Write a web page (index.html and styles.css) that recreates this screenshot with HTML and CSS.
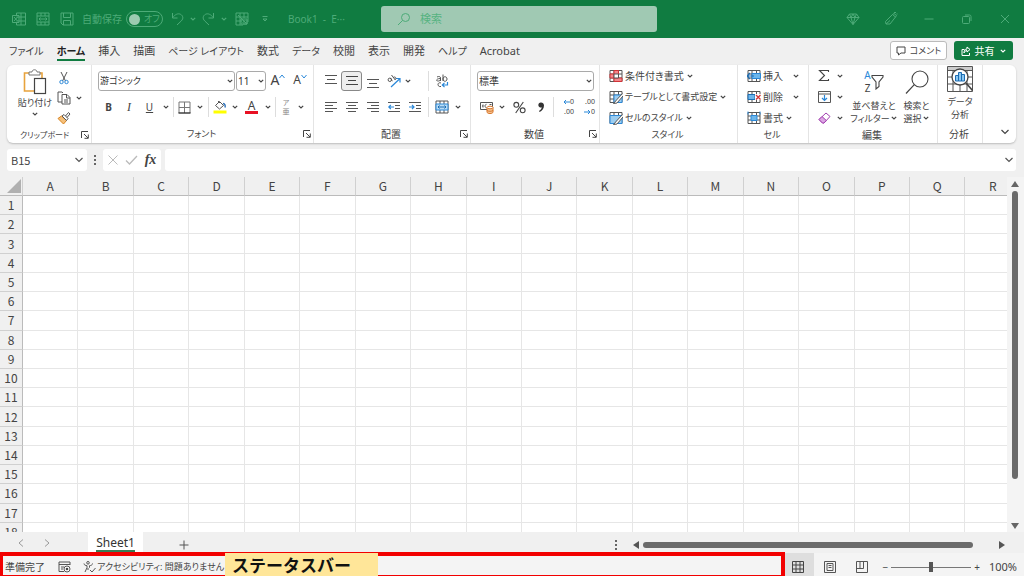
FILE: index.html
```html
<!DOCTYPE html>
<html lang="ja">
<head>
<meta charset="utf-8">
<title>Book1 - Excel</title>
<link rel="stylesheet" href="styles.css">
</head>
<body>
<svg class="defs" aria-hidden="true">
  <symbol id="chev" viewBox="0 0 8 8"><path d="M1.8 2.8 4 5l2.2-2.2" fill="none" stroke="currentColor" stroke-width="1.2"/></symbol>
  <symbol id="launch" viewBox="0 0 8 8"><path d="M.5 7V.5H7M3 3l4 4M7.300 3.500V7.300H3.500" fill="none" stroke="currentColor"/></symbol>
  <symbol id="tbl" viewBox="0 0 14 14"><path d="M1 1.500h12v11H1zM1 5h12M1 9h12M5 1.500v11M9.500 1.500v11" fill="#fff" stroke="#555"/></symbol>
</svg>

<header class="titlebar">
  <div class="quick">
    <svg width="14" height="14" viewBox="0 0 14 14"><path d="M4.500 3V1h9v12h-9v-2M9 1v12M4.500 5h9M4.500 9h9M.5 3.500H7v7H.5zM2 5l3.500 4M5.500 5 2 9"/></svg>
    <svg width="14" height="14" viewBox="0 0 14 14"><path d="M1 1h12v12H1zM1 4h12M1 10h12M5 1v3M9 1v3M5 10v3M9 10v3M3 7h8M4.500 5.500 3 7l1.500 1.500M9.500 5.500 11 7 9.500 8.500"/></svg>
    <svg width="14" height="14" viewBox="0 0 14 14"><path d="M1 1h12v12H3l-2-2zM3.500 1v4.500h7V1M3.500 13V8.500h7V13"/></svg>
  </div>
  <label class="autosave"><span>自動保存</span><input type="checkbox" role="switch" aria-label="自動保存"><span class="switch"><i></i>オフ</span></label>
  <div class="history">
    <button aria-label="元に戻す"><svg width="14" height="14" viewBox="0 0 14 14"><path d="M1.500 1v5h5M1.800 5.500C4 2.500 7 1 9.500 2.300s3.300 4.200.8 6.600L6 13"/></svg></button>
    <button aria-label="元に戻す一覧"><svg class="c"><use href="#chev"/></svg></button>
    <button aria-label="やり直し"><svg width="14" height="14" viewBox="0 0 14 14"><path d="M12.500 1v5h-5M12.200 5.500C10 2.500 7 1 4.500 2.300s-3.300 4.200-.8 6.600L8 13"/></svg></button>
    <button aria-label="やり直し一覧"><svg class="c"><use href="#chev"/></svg></button>
    <button aria-label="表の選択"><svg width="14" height="14" viewBox="0 0 14 14"><path d="M1 1h12v9M1 1v12h7M1 5h12M1 9h6M5 1v12M9 1v5M3 3l9 9M12 8v4H8M6 7h6v5H6zM7.500 8l3 3M10.500 8l-3 3"/></svg></button>
    <button aria-label="クイック アクセスのカスタマイズ"><svg width="8" height="8" viewBox="0 0 8 8"><path d="M1.500 1.500h5M2 4h4L4 6z"/></svg></button>
  </div>
  <span class="doc">Book1&nbsp; -&nbsp; E···</span>
  <label class="search"><svg width="14" height="14" viewBox="0 0 14 14"><circle cx="8.500" cy="5.500" r="4"/><path d="M5.500 8.500 1 13"/></svg><input type="text" placeholder="検索" aria-label="検索"></label>
  <div class="window">
    <button aria-label="プレミアム"><svg width="14" height="14" viewBox="0 0 14 14"><path d="M3.500 2h7L13 5.500 7 12.500 1 5.500zM1 5.500h12M3.500 2l1.500 3.500 2 7 2-7L10.500 2M5 5.500 7 2l2 3.500"/></svg></button>
    <button aria-label="ペン"><svg width="14" height="14" viewBox="0 0 14 14"><path d="M8.500 2.500 11.500 5 6 12H2l-.5-2.500zM8.500 2.500l1.500-1 2.500 2-1 1.500M2 12l4-3.500M10 .5h2M12.500 2h1"/></svg></button>
    <button aria-label="最小化"><svg width="10" height="10" viewBox="0 0 10 10"><path d="M.5 5h9"/></svg></button>
    <button aria-label="元のサイズ"><svg width="10" height="10" viewBox="0 0 10 10"><rect x=".5" y="2.500" width="7" height="7" rx="1"/><path d="M3 1h4.500A1.500 1.500 0 0 1 9 2.500V7"/></svg></button>
    <button aria-label="閉じる"><svg width="10" height="10" viewBox="0 0 10 10"><path d="m1 1 8 8M9 1 1 9"/></svg></button>
  </div>
</header>

<nav class="tabs">
  <a href="#" class="kana">ファイル</a><a href="#" class="kana on">ホーム</a><a href="#">挿入</a><a href="#">描画</a><a href="#" class="kana">ページ レイアウト</a><a href="#">数式</a><a href="#" class="kana">データ</a><a href="#">校閲</a><a href="#">表示</a><a href="#">開発</a><a href="#" class="kana">ヘルプ</a><a href="#">Acrobat</a>
  <button class="comment"><svg width="10" height="10" viewBox="0 0 10 10"><path d="M1 1h8v6H5L2.500 9V7H1z" fill="none" stroke="#444"/></svg>コメント</button>
  <button class="share"><svg width="10" height="10" viewBox="0 0 10 10"><path d="M3.500 3.500H1v6h7.500V7M6 1l3 2.500L6 6V4.500C4.500 4.500 3.500 5.500 3 7c0-2.500 1-4 3-4z" fill="none" stroke="#fff"/></svg>共有<svg class="c"><use href="#chev"/></svg></button>
</nav>

<main class="ribbon">
  <section class="group">
    <div class="clip">
      <button class="big"><svg width="24" height="26" viewBox="0 0 24 26"><path d="M6 4H1.500v18H11M17 4h2v5" fill="none" stroke="#e8a33d" stroke-width="1.600"/><path d="M6 6V3h3c0-3 5-3 5 0h3v3z" fill="#fff" stroke="#777"/><rect x="11.500" y="9.500" width="11" height="15" fill="#fff" stroke="#444" stroke-width="1.200"/></svg>貼り付け<svg class="c"><use href="#chev"/></svg></button>
      <div class="cliptools">
        <button aria-label="切り取り"><svg width="12" height="14" viewBox="0 0 12 14"><path d="M3 1l4.500 9M9 1 4.500 10" fill="none" stroke="#555"/><circle cx="3.500" cy="11" r="1.700" fill="none" stroke="#2b88d8"/><circle cx="8.500" cy="11" r="1.700" fill="none" stroke="#2b88d8"/></svg></button><i></i>
        <button aria-label="コピー"><svg width="14" height="14" viewBox="0 0 14 14"><path d="M5 11H1V1h4l1 1M5 3.500h5L13 6.500V13H5zM9.500 3.500V7H13M7 9h4M7 11h4" fill="none" stroke="#555"/></svg></button><button aria-label="コピー一覧"><svg class="c"><use href="#chev"/></svg></button>
        <button aria-label="書式のコピー"><svg width="14" height="14" viewBox="0 0 14 14"><path d="M1 7.500 4.500 5l5 4.500L6.500 13z" fill="#f5c07a" stroke="#d98420"/><path d="M5 5l2-1.500 4 4-1.500 2zM8.500 5l3-3.500L13 3l-3 3.500" fill="#fff" stroke="#555"/></svg></button><i></i>
      </div>
    </div>
    <footer><span class="left-label">クリップボード</span><button aria-label="クリップボードの設定"><svg class="l"><use href="#launch"/></svg></button></footer>
  </section>

  <section class="group">
    <div class="two">
      <div class="fontpick">
        <label class="pick"><select aria-label="フォント"><option>游ゴシック</option></select><svg class="c"><use href="#chev"/></svg></label>
        <label class="pick"><select aria-label="サイズ"><option>11</option></select><svg class="c"><use href="#chev"/></svg></label>
        <button class="grow" aria-label="拡大">A<svg width="6" height="5" viewBox="0 0 6 5"><path d="M.5 4 3 1l2.500 3" fill="none" stroke="#2b88d8"/></svg></button>
        <button class="grow small" aria-label="縮小">A<svg width="6" height="5" viewBox="0 0 6 5"><path d="M.5 1 3 4l2.500-3" fill="none" stroke="#2b88d8"/></svg></button>
      </div>
      <div class="fonttools">
        <button><b>B</b></button><button><em>I</em></button><button><u>U</u></button><button aria-label="下線"><svg class="c"><use href="#chev"/></svg></button><hr>
        <button aria-label="罫線"><svg width="13" height="13" viewBox="0 0 13 13"><path d="M1 12V1h11v11M6.500 1v11M1 6.500h11" fill="none" stroke="#777"/><path d="M.5 12h12" stroke="#333" stroke-width="1.400"/></svg></button><button aria-label="罫線一覧"><svg class="c"><use href="#chev"/></svg></button><hr>
        <button aria-label="塗りつぶし"><svg width="14" height="14" viewBox="0 0 14 14"><path d="M2.500 5.500 6.500 1.500l4 4L6.500 9zM5 1l2 2" fill="#fff" stroke="#555"/><path d="M10 3.500c2 0 2.500 2 2 4" fill="none" stroke="#2b6fb8" stroke-width="1.400"/><path d="M.5 10.500h13v3H.5z" fill="#ff0"/></svg></button><button aria-label="塗りつぶし一覧"><svg class="c"><use href="#chev"/></svg></button>
        <button class="fontcolor" aria-label="フォントの色">A</button><button aria-label="色一覧"><svg class="c"><use href="#chev"/></svg></button><hr>
        <button class="ruby" aria-label="ふりがな"><span>ア</span><span>亜</span></button><button aria-label="ふりがな一覧"><svg class="c"><use href="#chev"/></svg></button>
      </div>
    </div>
    <footer><span>フォント</span><button aria-label="フォントの設定"><svg class="l"><use href="#launch"/></svg></button></footer>
  </section>

  <section class="group">
    <div class="two">
      <div class="aligntools">
        <button aria-label="上揃え"><svg width="12" height="14" viewBox="0 0 12 14"><path d="M0 1.500h12M2 5.500h8M0 9.500h12" stroke="#555"/></svg></button>
        <button class="pressed" aria-label="上下中央揃え"><svg width="12" height="12" viewBox="0 0 12 12"><path d="M0 1.500h12M2 5.500h8M0 9.500h12" stroke="#444"/></svg></button>
        <button aria-label="下揃え"><svg width="12" height="14" viewBox="0 0 12 14"><path d="M0 5.500h12M2 9.500h8M0 13.500h12" stroke="#555"/></svg></button>
        <button aria-label="方向"><svg width="14" height="14" viewBox="0 0 14 14"><path d="M4 13 12.500 5M9 4.500h4v4" fill="none" stroke="#2b88d8" stroke-width="1.200"/><circle cx="2.800" cy="5.800" r="1.700" fill="none" stroke="#555"/><path d="M3.500 4 5.300 7.200M4.500 1l3.800 5M6.300 3.500c2-1.500 3.500.7 1.800 2.300" fill="none" stroke="#555"/></svg></button><button aria-label="方向一覧"><svg class="c"><use href="#chev"/></svg></button><hr>
        <button class="wrap" aria-label="折り返し"><svg width="14" height="14" viewBox="0 0 14 14"><path d="M2 3c2-1 3.500-.5 3.500 1v3M5.500 4.500c-5 0-4.500 3-2 2.500 1 0 2-1 2-1.500M8 .5V7M8 5c0-3 4-3 4 0s-4 3-4 0M6 9c-4-1.500-4 4.500 0 3.500" fill="none" stroke="#555"/><path d="M12.500 8v3H7.500M9.500 8.800 7.300 11l2.200 2.200" fill="none" stroke="#2b88d8" stroke-width="1.200"/></svg></button><i></i>
      </div>
      <div class="aligntools">
        <button aria-label="左揃え"><svg width="12" height="12" viewBox="0 0 12 12"><path d="M0 1.500h12M0 4.500h8M0 7.500h12M0 10.500h8" stroke="#555"/></svg></button>
        <button aria-label="中央揃え"><svg width="12" height="12" viewBox="0 0 12 12"><path d="M0 1.500h12M2 4.500h8M0 7.500h12M2 10.500h8" stroke="#555"/></svg></button>
        <button aria-label="右揃え"><svg width="12" height="12" viewBox="0 0 12 12"><path d="M0 1.500h12M4 4.500h8M0 7.500h12M4 10.500h8" stroke="#555"/></svg></button>
        <button aria-label="インデントを減らす"><svg width="12" height="12" viewBox="0 0 12 12"><path d="M0 1.500h12M7 4.500h5M7 7.500h5M0 10.500h12" stroke="#555"/><path d="M6 6H.8M2.800 4 .8 6l2 2" fill="none" stroke="#2b88d8" stroke-width="1.200"/></svg></button>
        <button aria-label="インデントを増やす"><svg width="12" height="12" viewBox="0 0 12 12"><path d="M0 1.500h12M7 4.500h5M7 7.500h5M0 10.500h12" stroke="#555"/><path d="M0 6h5M3 4l2 2-2 2" fill="none" stroke="#2b88d8" stroke-width="1.200"/></svg></button><hr>
        <button aria-label="結合"><svg width="14" height="14" viewBox="0 0 14 14"><path d="M1 1h12v12H1zM5 1v3M9 1v3M5 10v3M9 10v3" fill="#fff" stroke="#555"/><path d="M1 4h12v6H1z" fill="#b9dcf5" stroke="#2b88d8"/><path d="M3 7h8M4.500 5.500 3 7l1.500 1.500M9.500 5.500 11 7 9.500 8.500" fill="none" stroke="#1c6db3"/></svg></button><button aria-label="結合一覧"><svg class="c"><use href="#chev"/></svg></button>
      </div>
    </div>
    <footer><span class="kanji">配置</span><button aria-label="配置の設定"><svg class="l"><use href="#launch"/></svg></button></footer>
  </section>

  <section class="group">
    <div class="two">
      <label class="pick"><select aria-label="表示形式"><option>標準</option></select><svg class="c"><use href="#chev"/></svg></label>
      <div class="numtools">
        <button aria-label="通貨"><svg width="14" height="13" viewBox="0 0 14 13"><path d="M.5 1.500h12v7H.5z" fill="#fff" stroke="#555"/><path d="M3 3.500v3M2 5h1M6.500 3.300c-2 0-2 3.400 0 3.400M9.500 3.500h2" fill="none" stroke="#555"/><path d="M7 6.500v4.500c0 2 6 2 6 0V6.500" fill="#f5c79a" stroke="#d9772a"/><ellipse cx="10" cy="6.500" rx="3" ry="1.300" fill="#fff" stroke="#d9772a"/><path d="M7 9c0 1.700 6 1.700 6 0" fill="none" stroke="#d9772a"/></svg></button><button aria-label="通貨一覧"><svg class="c"><use href="#chev"/></svg></button>
        <button aria-label="パーセント"><svg width="13" height="13" viewBox="0 0 13 13"><g fill="none" stroke="#444" stroke-width="1.100"><circle cx="3.300" cy="3.800" r="2.400"/><circle cx="9.700" cy="9.300" r="2.400"/><path d="M10.300 1 2.700 12"/></g></svg></button>
        <button aria-label="桁区切り"><svg width="8" height="12" viewBox="0 0 8 12"><path d="M4 1.500a2.500 2.500 0 1 0 .8 4.800C4.500 8 3.300 9.300 2 10l.6 1C5 10 7 7.500 7 4.500 7 2.500 5.700 1.500 4 1.500z" fill="#333"/></svg></button><hr>
        <button class="dec" aria-label="小数点以下を増やす"><span><svg width="7" height="6" viewBox="0 0 7 6"><path d="M7 3H1M3 1 1 3l2 2" fill="none" stroke="#2b88d8"/></svg>0</span><span>.00</span></button>
        <button class="dec" aria-label="小数点以下を減らす"><span>.00</span><span><svg width="7" height="6" viewBox="0 0 7 6"><path d="M0 3h6M4 1l2 2-2 2" fill="none" stroke="#2b88d8"/></svg>0</span></button>
      </div>
    </div>
    <footer><span class="kanji">数値</span><button aria-label="数値の設定"><svg class="l"><use href="#launch"/></svg></button></footer>
  </section>

  <section class="group">
    <div class="list">
      <button><svg width="14" height="14" viewBox="0 0 14 14"><use href="#tbl"/><path d="M5 1.500h4.500v4H5zM1 5h4v4H1zM9.500 9H13v3.500H5V9z" fill="#f2878b" stroke="#d13438"/><path d="M5 5h4.500v4H5z" fill="#fff" stroke="#555"/></svg>条件付き書式<svg class="c"><use href="#chev"/></svg></button>
      <button class="kana"><svg width="14" height="14" viewBox="0 0 14 14"><use href="#tbl"/><path d="M5 5h8v7.500H5z" fill="#9ccdf0" stroke="#2b88d8"/><path d="M13.500 3.500 7.500 10l-3 3.500 3.500-.5 6-7" fill="#fff" stroke="#555"/></svg>テーブルとして書式設定<svg class="c"><use href="#chev"/></svg></button>
      <button class="kana"><svg width="14" height="14" viewBox="0 0 14 14"><use href="#tbl"/><path d="M1 4.500h12v8H1z" fill="#9ccdf0" stroke="#2b88d8"/><path d="M13.500 3.500 7.500 10l-3 3.500 3.500-.5 6-7" fill="#fff" stroke="#555"/></svg>セルのスタイル<svg class="c"><use href="#chev"/></svg></button>
    </div>
    <footer><span>スタイル</span></footer>
  </section>

  <section class="group">
    <div class="list cells">
      <button><svg width="14" height="14" viewBox="0 0 14 14"><use href="#tbl"/><path d="M5 4.500h8.500v5H5z" fill="#6db6ea" stroke="#2b88d8"/><path d="M0 7h7M3 4 0 7l3 3" fill="none" stroke="#1c6db3" stroke-width="1.200"/></svg>挿入<svg class="c end"><use href="#chev"/></svg></button>
      <button><svg width="14" height="14" viewBox="0 0 14 14"><use href="#tbl"/><path d="M1 4.500h7v5H1z" fill="#6db6ea" stroke="#1c6db3"/><path d="M8 4h6v6H8z" fill="#fff"/><path d="m9 5 4.500 4.500M13.500 5 9 9.500" stroke="#d13438" stroke-width="1.300"/></svg>削除<svg class="c end"><use href="#chev"/></svg></button>
      <button><svg width="14" height="14" viewBox="0 0 14 14"><use href="#tbl"/><path d="M4 4.500h6v5H4z" fill="#6db6ea" stroke="#2b88d8"/><path d="M1 .5v3M13 .5v3" stroke="#2b88d8"/></svg>書式<svg class="c"><use href="#chev"/></svg></button>
    </div>
    <footer><span>セル</span></footer>
  </section>

  <section class="group">
    <div class="edit">
      <div class="edittools">
        <button aria-label="合計"><svg width="12" height="13" viewBox="0 0 12 13"><path d="M10.500 3V1.500h-9L6.500 6.500l-5 5h9V10" fill="none" stroke="#444" stroke-width="1.100"/></svg></button><button aria-label="合計一覧"><svg class="c"><use href="#chev"/></svg></button>
        <button aria-label="フィル"><svg width="13" height="12" viewBox="0 0 13 12"><path d="M.5.5h12v11H.5zM.5 3h12" fill="#fff" stroke="#555"/><path d="M6.500 4v5M4 7l2.500 2.500L9 7" fill="none" stroke="#2b88d8" stroke-width="1.200"/></svg></button><button aria-label="フィル一覧"><svg class="c"><use href="#chev"/></svg></button>
        <button aria-label="クリア"><svg width="13" height="12" viewBox="0 0 13 12"><path d="M8 1l4 3.500-6 6.500H4.500L1 7.500z" fill="#fff" stroke="#a23fb0"/><path d="m4 4.500 4.300 4L6 11H4.500L1 7.500z" fill="#dca6e3" stroke="#a23fb0"/></svg></button><button aria-label="クリア一覧"><svg class="c"><use href="#chev"/></svg></button>
      </div>
      <button class="big"><span class="ico"><span class="az"><span>A</span><span>Z</span></span><svg width="13" height="16" viewBox="0 0 13 16"><path d="M1 1.500h11V3L8 8v4.500L5 15V8L1 3z" fill="none" stroke="#444" stroke-width="1.100"/></svg></span>並べ替えと<span class="ln">フィルター<svg class="c"><use href="#chev"/></svg></span></button>
      <button class="big"><span class="ico"><svg width="24" height="25" viewBox="0 0 24 25"><circle cx="15" cy="9" r="8" fill="none" stroke="#444" stroke-width="1.100"/><path d="M9.300 14.700 1 23.500" stroke="#444" stroke-width="1.200"/></svg></span>検索と<span class="ln">選択<svg class="c"><use href="#chev"/></svg></span></button>
    </div>
    <footer><span class="kanji">編集</span></footer>
  </section>

  <section class="group">
    <button class="big data"><span class="ico"><svg width="26" height="26" viewBox="0 0 26 26"><path d="M.5.5h25v25H.5zM.5 4.500h25M.5 11h25M.5 18h25M6 4.500v21M13 18v7.500M20 4.500v21" fill="#fff" stroke="#555"/><path d="M1 1h24v3H1z" fill="#ccc"/><circle cx="13" cy="11" r="8" fill="#fff" stroke="#444" stroke-width="1.300"/><path d="m19 17 6.500 7.500" stroke="#444" stroke-width="1.600"/><path d="M8.500 9.500h3V15h-3zM11.500 6.500h3V15h-3zM14.500 8.500h3V15h-3z" fill="#8cc8f2" stroke="#1c6db3"/></svg></span>データ<span class="ln">分析</span></button>
    <footer><span class="kanji">分析</span></footer>
  </section>
  <button class="collapse" aria-label="リボンを折りたたむ"><svg width="10" height="8" viewBox="0 0 10 8"><path d="m1.500 2 3.500 3.500L8.500 2" fill="none" stroke="#444" stroke-width="1.200"/></svg></button>
</main>

<div class="formula">
  <label class="name"><input type="text" value="B15" aria-label="名前ボックス"><svg width="10" height="8" viewBox="0 0 10 8"><path d="m1.500 2 3.500 3.500L8.500 2" fill="none" stroke="#555" stroke-width="1.200"/></svg></label>
  <svg class="dots" width="4" height="10" viewBox="0 0 4 10"><path d="M1 0h2v2H1zM1 4h2v2H1zM1 8h2v2H1z" fill="#666"/></svg>
  <div class="fx">
    <button aria-label="キャンセル"><svg width="12" height="12" viewBox="0 0 12 12"><path d="m1.500 1.500 9 9M10.500 1.500l-9 9" stroke="#bbb"/></svg></button>
    <button aria-label="入力"><svg width="13" height="12" viewBox="0 0 13 12"><path d="M1 6.500 4.500 10 12 2" fill="none" stroke="#bbb" stroke-width="1.300"/></svg></button>
    <button class="fn">fx</button>
  </div>
  <label class="bar"><input type="text" aria-label="数式バー"><svg width="10" height="8" viewBox="0 0 10 8"><path d="m1.500 2 3.500 3.500L8.500 2" fill="none" stroke="#555" stroke-width="1.200"/></svg></label>
</div>

<div class="work">
  <div class="sheet"><table id="grid"></table></div>
  <div class="vscroll">
    <svg width="8" height="6" viewBox="0 0 8 6"><path d="m0 6 4-6 4 6z" fill="#666"/></svg>
    <div class="thumb"></div>
    <svg class="down" width="8" height="6" viewBox="0 0 8 6"><path d="m0 0 4 6 4-6z" fill="#666"/></svg>
  </div>
</div>

<div class="sheets">
  <button aria-label="前のシート"><svg width="8" height="10" viewBox="0 0 8 10"><path d="M6 1.500 2 5l4 3.500" fill="none" stroke="#999"/></svg></button>
  <button aria-label="次のシート"><svg width="8" height="10" viewBox="0 0 8 10"><path d="M2 1.500 6 5 2 8.500" fill="none" stroke="#999"/></svg></button>
  <a href="#" class="sheettab"><span>Sheet1</span></a>
  <button class="add" aria-label="新しいシート"><svg width="10" height="10" viewBox="0 0 10 10"><path d="M5 .5v9M.5 5h9" stroke="#555"/></svg></button>
  <div class="hscroll">
    <svg width="4" height="10" viewBox="0 0 4 10"><path d="M1 0h2v2H1zM1 4h2v2H1zM1 8h2v2H1z" fill="#666"/></svg>
    <svg class="left" width="6" height="8" viewBox="0 0 6 8"><path d="M6 0 0 4l6 4z" fill="#555"/></svg>
    <div class="thumb"></div>
    <svg width="6" height="8" viewBox="0 0 6 8"><path d="m0 0 6 4-6 4z" fill="#555"/></svg>
  </div>
</div>

<footer class="status">
  <span>準備完了</span>
  <svg class="rec" width="13" height="12" viewBox="0 0 13 12"><path d="M6 10.500H1V1h11v3M1 3.500h11M3 6h3M3 8h2" fill="none" stroke="#555"/><circle cx="9" cy="8" r="3" fill="#fff" stroke="#555"/><circle cx="9" cy="8" r="1.300" fill="#444"/></svg>
  <svg class="acc" width="13" height="12" viewBox="0 0 13 12"><circle cx="5" cy="1.800" r="1.300" fill="none" stroke="#555"/><path d="M1 2.500c0 1.500 1.500 2 3 2.200v2L2 11M9.500 2.500c0 1.500-1.500 2-3 2.200v2M4 8h2M7 9l2 2 3.500-4" fill="none" stroke="#555"/></svg>
  <span class="kana">アクセシビリティ: 問題ありません</span>
  <div class="views">
    <button class="on" aria-label="標準"><svg width="12" height="12" viewBox="0 0 12 12"><path d="M.5.5h11v11H.5zM.5 4h11M.5 8h11M4 .5v11M8 .5v11" fill="none" stroke="#444"/></svg></button>
    <button aria-label="ページ レイアウト"><svg width="12" height="12" viewBox="0 0 12 12"><path d="M.5.5h11v11H.5zM3 2.500h6v7H3zM4.500 4.500h3M4.500 6.500h3" fill="none" stroke="#555"/></svg></button>
    <button aria-label="改ページ プレビュー"><svg width="12" height="12" viewBox="0 0 12 12"><path d="M.5.5h11v11H.5zM.5 7.500H7.500M4 .5v7M7.500.5v7" fill="none" stroke="#555"/></svg></button>
  </div>
  <div class="zoom"><span>−</span><input type="range" min="0" max="100" value="50" aria-label="ズーム"><span>+</span></div>
  <span class="percent">100%</span>
  <div class="frame"></div>
  <strong class="callout">ステータスバー</strong>
</footer>
<script src="grid.js"></script>
</body>
</html>
```
FILE: styles.css
```css
* { box-sizing: border-box; }
body {
  margin: 0; height: 100vh; overflow: hidden;
  display: flex; flex-direction: column;
  background: #f0f0f0; color: #444;
  font-family: "Noto Sans", "Noto Sans CJK JP", sans-serif;
  font-size: 10px; line-height: 12px;
  font-feature-settings: "palt";
}
button, input, select { font: inherit; font-feature-settings: inherit; color: inherit; background: none; border: 0; margin: 0; padding: 0; }
button { display: flex; align-items: center; justify-content: center; white-space: nowrap; }
a { color: inherit; text-decoration: none; }
svg { flex: none; display: block; }
.defs { position: absolute; width: 0; height: 0; }
.c { width: 8px; height: 8px; }
.l { width: 8px; height: 8px; }
hr { width: 1px; height: 100%; margin: 0 auto; border: 0; background: #ddd; }

/* title bar */
.titlebar {
  flex: none; height: 38px; display: flex; align-items: center;
  padding-left: 12px; background: #107c41; color: #4dab78;
}
.titlebar path, .titlebar circle, .titlebar rect { fill: none; stroke: #4dab78; }
.quick { display: flex; gap: 10px; }
.autosave { display: flex; align-items: center; gap: 4px; margin-left: 8px; }
.autosave input { position: absolute; opacity: 0; }
.switch { display: flex; align-items: center; gap: 4px; width: 37px; height: 16px; padding-left: 2px; border: 1px solid #4dab78; border-radius: 8px; white-space: nowrap; font-size: 9px; }
.switch i { flex: none; width: 11px; height: 11px; border-radius: 50%; background: #9bcbb0; }
.history { display: grid; grid-template-columns: 18px 11px 20px 11px 26px 20px; margin-left: 6px; }
.doc { width: 93px; margin-left: 13px; white-space: nowrap; }
.search { flex: 0 0 276px; height: 26px; display: flex; align-items: center; gap: 9px; padding-left: 16px; border-radius: 3px; background: #a0c9b3; }
.search input { flex: 1; min-width: 0; outline: 0; font-size: 11px; }
.search input::placeholder { color: #55b381; opacity: 1; }
.window { display: grid; grid-template-columns: repeat(5, 38px); margin-left: auto; }

/* ribbon tabs */
.tabs { flex: none; height: 25px; display: flex; align-items: center; gap: 13px; padding: 0 11px 0 9px; font-size: 11px; white-space: nowrap; }
.tabs a { line-height: 16px; padding-top: 2px; border-bottom: 2px solid transparent; }
.tabs .kana { font-size: 10px; }
.tabs .on { font-weight: bold; color: #222; border-color: #107c41; }
.tabs button { height: 19px; gap: 4px; border-radius: 3px; font-size: 10px; }
.tabs .comment { width: 57px; margin-left: auto; font-size: 9px; border: 1px solid #bbb; background: #fff; }
.tabs .share { width: 59px; margin-left: -6px; background: #107c41; color: #fff; }

/* ribbon */
.ribbon {
  flex: none; margin: 2px 8px 0 7px; background: #fff; border-radius: 6px; box-shadow: 0 1px 2px #bbb;
  display: grid; grid-template-columns: 85px 222px 157px 129px 138px 71px 129px 45px 1fr;
}
.group { height: 78px; display: flex; flex-direction: column; justify-content: space-between; border-right: 1px solid #e4e4e4; }
.group > footer { height: 17px; display: grid; grid-template-columns: 1fr; align-items: center; justify-items: center; padding: 0 2px 1px 0; font-size: 9px; }
.group > footer > * { grid-area: 1 / 1; }
.group > footer button { justify-self: end; }
.group > footer .left-label { justify-self: start; padding-left: 13px; font-size: 8px; }
.group > footer .kanji { font-size: 10px; }
.big { flex-direction: column; font-size: 9px; line-height: 13px; }
.big .ln { display: flex; align-items: center; }
.ico { display: flex; align-items: center; height: 27px; margin-bottom: 3px; }
.clip { display: grid; grid-template-columns: 36px 1fr; padding: 3px 0 0 10px; }
.clip .big { gap: 1px; justify-content: flex-start; padding-top: 1px; }
.cliptools { display: grid; grid-template-columns: 20px 10px; grid-template-rows: repeat(3, 20px); padding-left: 1px; }
.two { display: flex; flex-direction: column; gap: 6px; padding: 6px 5px 0 6px; }
.pick { display: grid; align-items: center; height: 20px; border: 1px solid #aaa; border-radius: 3px; }
.pick > * { grid-area: 1 / 1; }
.pick select { width: 100%; height: 18px; appearance: none; padding-left: 1px; outline: 0; color: #333; }
.fontpick .pick:first-child select { font-size: 9px; }
.pick svg { justify-self: end; pointer-events: none; }
.fontpick { display: grid; grid-template-columns: 137px 30px 22px 20px; column-gap: 1px; }
.grow { font-size: 14px; align-items: flex-start; padding-top: 3px; }
.grow.small { font-size: 12px; }
.fonttools { display: grid; height: 20px; grid-template-columns: 21px 20px 21px 11px 4px 19px 11px 6px 18px 11px 23px 10px 4px 18px 12px; }
.fonttools em { font-family: "Liberation Serif", serif; font-size: 12px; }
.fonttools .fontcolor { place-self: center; width: 13px; height: 14px; font-size: 12px; line-height: 11px; border-bottom: 3px solid #e81123; }
.ruby { flex-direction: column; font-size: 7px; line-height: 9px; color: #888; }
.aligntools { display: grid; height: 20px; grid-template-columns: 21px 21px 21px 21px 21px 6px 22px 9px; }
.aligntools .c { margin-right: 13px; }
.aligntools button:last-child .c { margin: 0; }
.aligntools .pressed { border: 1px solid #888; border-radius: 3px; background: #eee; }
.numtools { display: grid; height: 20px; grid-template-columns: 19px 12px 22px 21px 4px 19px 21px; }
.dec { flex-direction: column; font-size: 7px; line-height: 10px; align-items: flex-end; }
.dec span { display: flex; align-items: center; }
.list { display: grid; grid-template-rows: repeat(3, 21px); padding-left: 9px; }
.list button { justify-content: flex-start; gap: 2px; font-size: 10px; }
.list .kana { font-size: 9px; }
.list.cells .end { margin-left: 7px; }
.edit { display: grid; grid-template-columns: 34px 54px 31px; padding-left: 4px; }
.edittools { display: grid; grid-template-columns: 22px 10px; grid-template-rows: repeat(3, 21px); }
.az { display: flex; flex-direction: column; font-size: 10px; line-height: 13px; }
.az span:first-child { color: #2b88d8; }
.data { align-self: stretch; }
.collapse { align-self: end; justify-self: end; width: 22px; height: 22px; }

/* formula bar */
.formula { flex: none; display: flex; height: 34px; padding: 6px 8px 6px 7px; }
.formula label, .fx { align-items: center; background: #fff; border-radius: 3px; }
.formula label { display: flex; }
.name { width: 80px; padding: 0 3px 0 4px; font-size: 11px; font-family: "Noto Sans CJK JP", sans-serif; }
.formula input { flex: 1; min-width: 0; outline: 0; }
.dots { align-self: center; margin: 0 6px; }
.fx { display: grid; width: 58px; margin-right: 4px; grid-template-columns: repeat(3, 19px); }
.fn { font: italic bold 14px "Liberation Serif", serif; }
.formula .bar { flex: 1; padding-right: 2px; }

/* worksheet */
.work { flex: 1; min-height: 0; display: flex; }
.sheet { flex: 1; min-width: 0; overflow: hidden; background: #fff; }
table { table-layout: fixed; border-collapse: separate; border-spacing: 0; width: calc(100% + 14px); height: 365px; font: 12px/16px "Noto Sans CJK JP", sans-serif; }
th { padding: 0; font-weight: normal; background: #f0f0f0; border-right: 1px solid #d0d0d0; border-bottom: 1px solid #d0d0d0; }
thead th { height: 19px; border-bottom-color: #bbb; }
tbody th { border-right-color: #bbb; }
td { padding: 0; border-right: 1px solid #e6e6e6; border-bottom: 1px solid #e6e6e6; }
.corner { width: 23px; text-align: right; }
.corner svg { display: inline-block; vertical-align: bottom; }
.vscroll { width: 17px; display: flex; flex-direction: column; align-items: center; gap: 4px; padding: 4px 2px 3px 0; background: #f4f4f4; }
.thumb { border-radius: 4px; background: #6b6b6b; }
.vscroll .thumb { width: 6px; flex: 0 1 288px; }
.down { margin-top: auto; }

/* sheet tabs */
.sheets { flex: none; display: flex; height: 21px; padding-left: 8px; }
.sheets > button { width: 26px; }
.sheettab { display: flex; justify-content: center; width: 55px; margin-left: 28px; background: #fff; font-size: 12px; color: #333; }
.sheettab span { height: 20px; line-height: 22px; border-bottom: 2px solid #3a7d55; }
.sheets .add { width: 30px; margin: 4px 0 0 26px; }
.hscroll { flex: 0 1 391px; display: flex; align-items: center; margin: 4px 19px 0 auto; }
.left { margin: 0 4px 0 15px; }
.hscroll .thumb { flex: 0 1 330px; height: 6px; }
.hscroll svg:last-child { margin-left: auto; }

/* status bar */
.status { position: relative; flex: none; display: flex; align-items: center; height: 23px; padding: 5px 7px 0 5px; background: #f4f4f4; white-space: nowrap; }
.status .kana { font-size: 9px; }
.rec { margin-left: 13px; }
.acc { margin: 0 1px 0 12px; }
.views { display: flex; align-self: stretch; margin: -5px 0 0 auto; }
.views button { width: 32px; padding-top: 5px; }
.views button:first-child { width: 32px; }
.views .on { background: #dedede; }
.zoom { display: flex; align-items: center; gap: 3px; margin-left: 5px; }
.zoom input { appearance: none; width: 80px; height: 10px; background: linear-gradient(#777, #777) center / 100% 1px no-repeat; }
.zoom input::-webkit-slider-thumb { appearance: none; width: 4px; height: 10px; background: #555; }
.percent { margin-left: 9px; font-size: 11px; }
.frame { position: absolute; left: 0; top: -1px; bottom: 0; width: 785px; border: solid #f20000; border-width: 4px 4px 1px 3px; }
.callout { position: absolute; left: 225px; top: 0; bottom: 0; width: 153px; padding-left: 7px; background: #ffe699; color: #111; font-size: 17px; line-height: 25px; font-feature-settings: normal; }
```
FILE: grid.js
```js
const columns = "ABCDEFGHIJKLMNOPQR".split("");
const rowCount = 18;
const corner = '<th class="corner"><svg width="15" height="15" viewBox="0 0 15 15"><path d="M14 0v14H0z" fill="#b0b0b0"/></svg></th>';
const head = columns.map(c => `<th scope="col">${c}</th>`).join("");
let rows = "";
for (let r = 1; r <= rowCount; r++) {
  rows += `<tr><th scope="row">${r}</th>${"<td></td>".repeat(columns.length)}</tr>`;
}
document.getElementById("grid").innerHTML = `<thead><tr>${corner}${head}</tr></thead><tbody>${rows}</tbody>`;
```
